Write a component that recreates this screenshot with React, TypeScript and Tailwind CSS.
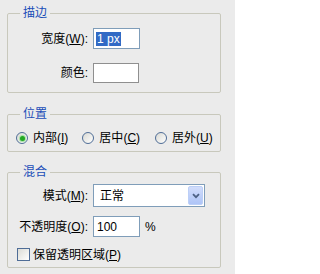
import React from "react";

// Photoshop "描边" (Stroke) dialog, XP-style group boxes.

const FONT = {
  fontFamily: '"Liberation Sans", "Noto Sans CJK SC", sans-serif',
};

function Mn({ children }: { children: React.ReactNode }) {
  return <span className="underline underline-offset-[1px]">{children}</span>;
}

function Group({
  title,
  className,
  children,
}: {
  title: string;
  className?: string;
  children: React.ReactNode;
}) {
  return (
    <fieldset
      className={`w-[214px] rounded-[2px] border border-[#c8c8bc] ${className ?? ""}`}
    >
      <legend className="ml-[12px] px-[3px] text-[12px] leading-[14px] text-[#1a4db8]">
        {title}
      </legend>
      {children}
    </fieldset>
  );
}

function Radio({ checked, label, mn }: { checked?: boolean; label: string; mn: string }) {
  return (
    <label className="flex items-center gap-[5px]">
      <span className="flex h-[12px] w-[12px] items-center justify-center rounded-full border border-[#4f6d97] bg-gradient-to-br from-[#d9d9d3] to-white">
        {checked && (
          <span className="h-[5px] w-[5px] rounded-full bg-[#24a824] shadow-[0_0_1px_1px_#9fe09f]" />
        )}
      </span>
      <span>
        {label}(<Mn>{mn}</Mn>)
      </span>
    </label>
  );
}

export default function App() {
  return (
    <div
      className="h-[274px] w-[235px] bg-[#ebebeb] pl-[7px] pt-[6px] text-[12px] leading-[14px] text-black"
      style={FONT}
    >
      <Group title="描边">
        <div className="flex flex-col gap-[14px] pb-[9px] pt-[8px]">
          <div className="flex h-[21px] items-center">
            <span className="w-[80px] text-right">
              宽度(<Mn>W</Mn>):
            </span>
            <div className="ml-[5px] flex h-[21px] w-[47px] items-center border border-[#7f9db9] bg-white pl-[2px]">
              <span className="bg-[#316ac5] px-[1px] text-white">1 px</span>
            </div>
          </div>
          <div className="flex h-[20px] items-center">
            <span className="w-[80px] text-right">颜色:</span>
            <div className="ml-[5px] h-[20px] w-[46px] border border-[#8f8f8f] bg-white" />
          </div>
        </div>
      </Group>

      <Group title="位置" className="mt-[14px]">
        <div className="flex h-[14px] items-center box-content pb-[6px] pl-[8px] pt-[10px]">
          <Radio checked label="内部" mn="I" />
          <div className="ml-[14px]">
            <Radio label="居中" mn="C" />
          </div>
          <div className="ml-[15px]">
            <Radio label="居外" mn="U" />
          </div>
        </div>
      </Group>

      <Group title="混合" className="mt-[13px]">
        <div className="flex flex-col pb-[6px] pt-[5px]">
          <div className="flex h-[23px] items-center">
            <span className="w-[80px] text-right">
              模式(<Mn>M</Mn>):
            </span>
            <div className="ml-[5px] flex h-[23px] w-[112px] items-stretch border border-[#7f9db9] bg-white">
              <span className="flex flex-1 items-center pl-[6px]">正常</span>
              <span className="m-px flex w-[15px] items-center justify-center rounded-[2px] border border-[#bccff7] bg-gradient-to-b from-[#d2ddfb] to-[#aec4f7]">
                <svg width="8" height="6" viewBox="0 0 8 6">
                  <path
                    d="M1 1.2 L4 4.2 L7 1.2"
                    fill="none"
                    stroke="#4d6185"
                    strokeWidth="1.8"
                  />
                </svg>
              </span>
            </div>
          </div>
          <div className="mt-[9px] flex h-[21px] items-center">
            <span className="w-[80px] whitespace-nowrap text-right">
              <span className="-ml-[4px]">不透明度(<Mn>O</Mn>):</span>
            </span>
            <div className="ml-[5px] flex h-[21px] w-[47px] items-center border border-[#7f9db9] bg-white pl-[3px]">
              100
            </div>
            <span className="ml-[5px]">%</span>
          </div>
          <label className="mt-[11px] flex h-[13px] items-center gap-[3px] pl-[9px]">
            <span className="h-[13px] w-[13px] border border-[#4f6d97] bg-gradient-to-br from-[#dcdcd6] to-white" />
            <span>
              保留透明区域(<Mn>P</Mn>)
            </span>
          </label>
        </div>
      </Group>
    </div>
  );
}
